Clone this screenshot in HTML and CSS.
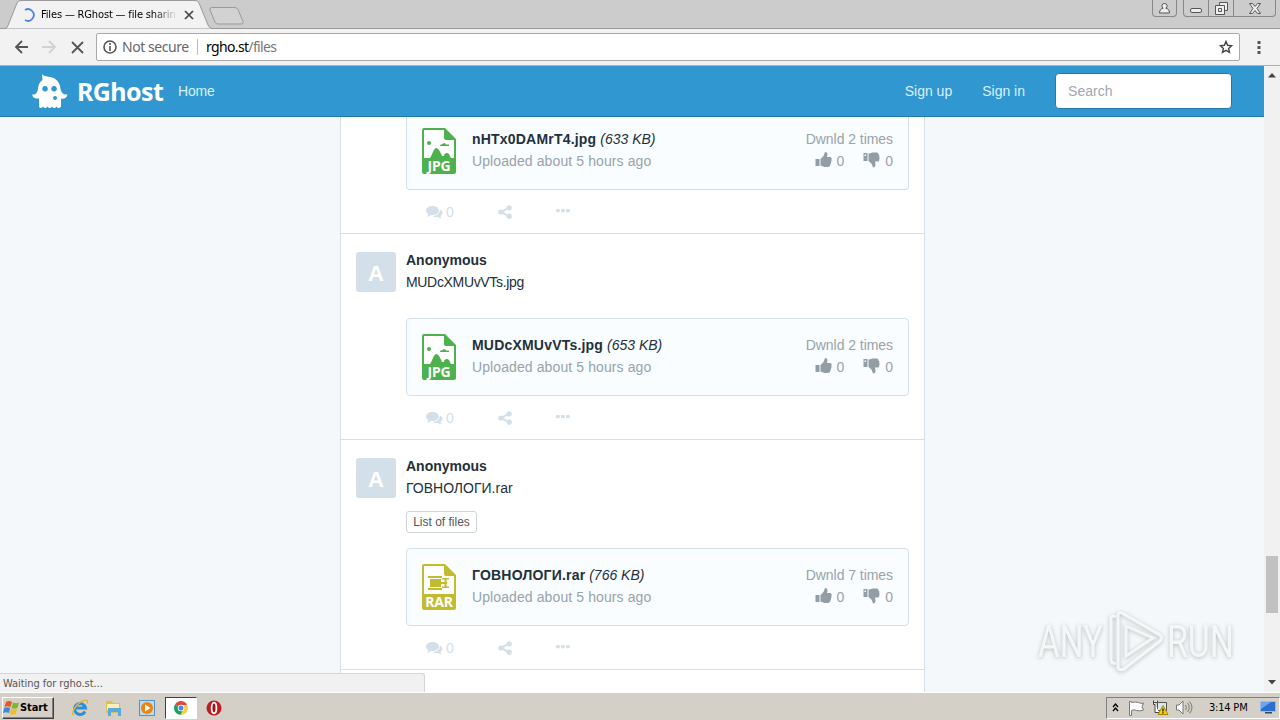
FILE: index.html
```
<!DOCTYPE html>
<html lang="en">

<head>
  <meta charset="UTF-8">
  <title>Files — RGhost — file sharing</title>
  <link rel="stylesheet" href="styles.css">
</head>

<body>
  <svg class="defs" width="0" height="0">
    <symbol id="i-jpg" viewBox="0 0 34 46">
      <path fill="#4db14d" d="M2 0h21l11 11v33a2 2 0 0 1-2 2H2a2 2 0 0 1-2-2V2a2 2 0 0 1 2-2z" />
      <path fill="#fff" d="M2 2h20v8q0 2 2 2h8v18h-3c-1-2-2-5-4-5s-3 1-3 3h-2c-2-5-4-8-6-8s-4 7-6 10H2z" />
      <circle cx="7" cy="15" r="2" fill="#4db14d" />
      <path fill="#4db14d" d="M18 17q3-1 4-2 2 0 2 1.500h3v1.500h-9z" />
    </symbol>
    <symbol id="i-rar" viewBox="0 0 34 46">
      <path fill="#c3bb2f" d="M2 0h21l11 11v33a2 2 0 0 1-2 2H2a2 2 0 0 1-2-2V2a2 2 0 0 1 2-2z" />
      <path fill="#fff" d="M2 2h20v8q0 2 2 2h8v18H2z" />
      <path fill="#c3bb2f" d="M6 12h14v2H6zM8 15h11v8H8zM6 24h14v2H6zM19 18h6v2h-6zM20 14h7v1.500h-2.500v7H27V24h-7v-1.500h2.500v-7H20z" />
    </symbol>
    <symbol id="i-up" viewBox="0 0 16 16">
      <path d="M0 7h4v7H0zM5 7l3-3 1.500-4c2 0 2.500 1 2.500 2.500L11.500 5H15c1.500 1 1.500 2 .8 3 .5 1 .2 2-.4 2.500.2 1-.1 2-.7 2.300 0 1.700-1 2.200-2.700 2.200H9l-4-1.500z" />
    </symbol>
    <symbol id="i-down" viewBox="0 0 16 16">
      <path fill-rule="evenodd" d="M0 1h4v8H0zM1 2.500v1.500h1.500V2.500zM5 1.500h1L9 .5h4c1.500 0 2 .8 2 2 .8.500 1 1.500.7 2.300.5 1 .5 2 0 2.700C16 9 15 9.500 14 9.500h-2.500l.5 3c0 2-.5 3-2.500 3L8 11.500 5 9z" />
    </symbol>
    <symbol id="i-comments" viewBox="0 0 17 14">
      <path d="M6.500 1C10 1 13 3 13 5.500S10 10 6.500 10L5 9.900C4 11 2.500 11.500 1 11.500c1-.8 1.300-1.500 1.400-2.400C1 8.300 0 7 0 5.500 0 3 3 1 6.500 1z" />
      <path d="M14 4.500c1.500.8 2.500 2 2.500 3.300s-.8 2.400-2 3.200c.1.800.5 1.500 1.500 2.300-1.500 0-3-.5-4-1.400-2 .3-4.300 0-5.700-.9 4 0 7.500-2 7.700-6.500z" />
    </symbol>
    <symbol id="i-share" viewBox="0 0 14 14">
      <circle cx="11.200" cy="2.800" r="2.600" />
      <circle cx="2.800" cy="7" r="2.600" />
      <circle cx="11.200" cy="11.200" r="2.600" />
      <path d="M2.500 6l8-4 .8 1.800-6 3.200 6 3.200-.8 1.800-8-4z" />
    </symbol>
    <symbol id="i-dots" viewBox="0 0 14 4">
      <rect width="3.800" height="3.300" rx="1" />
      <rect x="5" width="3.800" height="3.300" rx="1" />
      <rect x="10" width="3.800" height="3.300" rx="1" />
    </symbol>
  </svg>

  <div class="titlebar">
    <div class="tab">
      <svg class="tab-shape" width="216" height="29">
        <path d="M0 28.500h5q2 0 3-3L17 3q1-2.500 4-2.500h174q3 0 4 2.500l9 22q1 3 4 3.500h4" />
      </svg>
      <svg class="spinner" width="14" height="14">
        <path d="M3 2A5.800 5.800 0 1 1 3 12" />
      </svg>
      <span class="tab-title">Files — RGhost — file sharing</span>
      <svg class="tab-close" width="10" height="10">
        <path d="M1 1l8 8M9 1L1 9" />
      </svg>
    </div>
    <svg class="newtab" width="36" height="18">
      <path d="M3 .5h23q2 0 3 2l5 12q.5 2.500-1 2.500H9q-2 0-3-2L1 3Q.5.500 3 .5z" />
    </svg>
    <div class="winbtns">
      <div class="winbtn user">
        <svg width="11" height="11"><path d="M5.500.5a2.500 2.500 0 0 1 1.300 4.700C9 5.800 10.500 7 10.500 10H.5C.5 7 2 5.800 4.200 5.200A2.500 2.500 0 0 1 5.500.5z" /></svg>
      </div>
      <div class="winbtn min">
        <svg width="13" height="5"><rect x=".5" y=".5" width="11" height="4" rx="1.500" /></svg>
      </div>
      <div class="winbtn max">
        <svg width="13" height="13"><path d="M4.500 3.500v-3h8v8h-3M.5 3.500h9v9h-9zM3.500 6.500h3v3h-3z" /></svg>
      </div>
      <div class="winbtn close">
        <svg width="12" height="11"><path d="M.5.500h3L6 3.500 8.500.5h3L8 5.500l3.500 5h-3L6 7.500l-2.500 3h-3L4 5.500z" /></svg>
      </div>
    </div>
  </div>

  <div class="toolbar">
    <svg class="tool back" width="15" height="14"><path d="M14 7H2M8 1L2 7l6 6" /></svg>
    <svg class="tool fwd" width="15" height="14"><path d="M0 7h13M7 1l6 6-6 6" /></svg>
    <svg class="tool stop" width="13" height="13"><path d="M1 1l11 11M12 1L1 12" /></svg>
    <div class="omnibox">
      <svg width="14" height="14" class="info"><circle cx="7" cy="7" r="6" /><path d="M7 6v5M7 3v2" /></svg>
      <span class="notsecure">Not secure</span>
      <span class="url">rgho.st<i>/files</i></span>
      <svg width="14" height="14" class="star"><path d="M7 1.500l1.600 3.800 4 .4-3 2.700.9 4L7 10.300 3.500 12.400l.9-4-3-2.700 4-.4z" /></svg>
    </div>
    <svg class="menu" width="4" height="14"><path d="M.5 1h3v3h-3zM.5 6h3v3h-3zM.5 11h3v3h-3z" /></svg>
  </div>

  <div class="content">
    <div class="page">
      <nav class="navbar">
        <a class="brand">
          <svg width="36" height="35" viewBox="0 0 36 35">
            <path fill="#fff" fill-rule="evenodd" d="M10 0c1 2 4 2 8 3 6 1 10 5 10.500 12 1 4 3 6 7 5.500-1 4-4 5-6.500 4v8c-2 2-3 2-4.500 0-1.500 2-3 2-4.500 0-1.500 2-3 2-4.500 0-1.500 2-3 2-4.500 0-1.500 2-3 2-4 0v-8C4 25 1 24 0 20.500c4 .5 5-1.500 6-5.500.3-4 1.500-7 4.500-9zM13 12a2.800 2.800 0 1 0 .1 0zM22 12a2.800 2.800 0 1 0 .1 0zM23 22a2 2 0 1 0 .1 0z" />
          </svg>
          <span class="brand-name">RGhost</span>
        </a>
        <a class="nav-link home">Home</a>
        <a class="nav-link signup">Sign up</a>
        <a class="nav-link signin">Sign in</a>
        <div class="search">Search</div>
      </nav>

      <div class="feed">
        <div class="post cut">
          <div class="post-body">
            <div class="card">
              <div class="type">
                <svg width="34" height="46"><use href="#i-jpg" /></svg>
                <span>JPG</span>
              </div>
              <div class="file">
                <div><b>nHTx0DAMrT4.jpg</b> <em>(633 KB)</em></div>
                <div class="muted up">Uploaded about 5 hours ago</div>
              </div>
              <div class="stats muted">
                <div>Dwnld 2 times</div>
                <div class="votes">
                  <svg width="17" height="16"><use href="#i-up" /></svg><span>0</span>
                  <svg width="17" height="16"><use href="#i-down" /></svg><span>0</span>
                </div>
              </div>
            </div>
            <div class="actions">
              <svg width="17" height="14"><use href="#i-comments" /></svg><span>0</span>
              <svg class="share" width="14" height="14"><use href="#i-share" /></svg>
              <svg class="dots" width="14" height="4"><use href="#i-dots" /></svg>
            </div>
          </div>
        </div>

        <div class="post">
          <div class="avatar">A</div>
          <div class="post-body">
            <div class="author">Anonymous</div>
            <div class="name n1">MUDcXMUvVTs.jpg</div>
            <div class="card">
              <div class="type">
                <svg width="34" height="46"><use href="#i-jpg" /></svg>
                <span>JPG</span>
              </div>
              <div class="file">
                <div><b>MUDcXMUvVTs.jpg</b> <em>(653 KB)</em></div>
                <div class="muted up">Uploaded about 5 hours ago</div>
              </div>
              <div class="stats muted">
                <div>Dwnld 2 times</div>
                <div class="votes">
                  <svg width="17" height="16"><use href="#i-up" /></svg><span>0</span>
                  <svg width="17" height="16"><use href="#i-down" /></svg><span>0</span>
                </div>
              </div>
            </div>
            <div class="actions">
              <svg width="17" height="14"><use href="#i-comments" /></svg><span>0</span>
              <svg class="share" width="14" height="14"><use href="#i-share" /></svg>
              <svg class="dots" width="14" height="4"><use href="#i-dots" /></svg>
            </div>
          </div>
        </div>

        <div class="post">
          <div class="avatar">A</div>
          <div class="post-body">
            <div class="author">Anonymous</div>
            <div class="name">ГОВНОЛОГИ.rar</div>
            <div class="list-btn">List of files</div>
            <div class="card">
              <div class="type">
                <svg width="34" height="46"><use href="#i-rar" /></svg>
                <span>RAR</span>
              </div>
              <div class="file">
                <div><b>ГОВНОЛОГИ.rar</b> <em>(766 KB)</em></div>
                <div class="muted up">Uploaded about 5 hours ago</div>
              </div>
              <div class="stats muted">
                <div>Dwnld 7 times</div>
                <div class="votes">
                  <svg width="17" height="16"><use href="#i-up" /></svg><span>0</span>
                  <svg width="17" height="16"><use href="#i-down" /></svg><span>0</span>
                </div>
              </div>
            </div>
            <div class="actions">
              <svg width="17" height="14"><use href="#i-comments" /></svg><span>0</span>
              <svg class="share" width="14" height="14"><use href="#i-share" /></svg>
              <svg class="dots" width="14" height="4"><use href="#i-dots" /></svg>
            </div>
          </div>
        </div>
      </div>
    </div>

    <div class="scrollbar">
      <svg width="8" height="5"><path d="M4 0l4 4.500H0z" /></svg>
      <div class="thumb"></div>
      <svg width="8" height="5"><path d="M0 0h8L4 4.500z" /></svg>
    </div>

    <div class="status">Waiting for rgho.st...</div>

    <svg class="watermark" width="220" height="76" viewBox="0 0 220 76">
      <g class="wm-text">
        <text x="4" y="50" textLength="65" lengthAdjust="spacingAndGlyphs">ANY</text>
        <text x="133" y="50" textLength="67" lengthAdjust="spacingAndGlyphs">RUN</text>
      </g>
      <g class="wm-mark">
        <path d="M82 10q-5-3-5 2v40q0 5 5 4" />
        <path d="M84 9q0-5 4-3l38 22q3 3 0 6L90 62q-4 2-6-1z" />
        <path d="M92 19l27 12-27 18z" />
      </g>
    </svg>
  </div>

  <div class="taskbar">
    <div class="start">
      <svg width="17" height="16" viewBox="0 0 17 16">
        <path fill="#e8562a" d="M3 2q3-2 6 0L7.500 7q-3-1.500-6 0z" />
        <path fill="#7cb82f" d="M10 2.500q3 1.500 6 0L14.500 8q-3 1.500-6 0z" />
        <path fill="#3b8bd8" d="M1.200 8q3-1.500 6 0L6 13q-3-1.500-6 0z" />
        <path fill="#f5bc27" d="M8 8.800q3 1.500 6 0L12.800 14q-3 1.500-6 0z" />
      </svg>
      <span>Start</span>
    </div>
    <div class="launch">
      <svg width="18" height="18" viewBox="0 0 18 18">
        <path fill="none" stroke="#2b8fdc" stroke-width="3" d="M14 12.500A5.500 5.500 0 1 1 14.500 9H5" />
        <path fill="none" stroke="#e9b52b" stroke-width="1.500" d="M3 16C-1 15 5 4 13 1.500c4-1 4 1 3 3" />
      </svg>
    </div>
    <div class="launch">
      <svg width="18" height="18" viewBox="0 0 18 18">
        <path fill="#e3bd50" d="M1 2h6l1 2h7v10H1z" />
        <path fill="#fbefb4" d="M2 5h12v6H2z" />
        <path fill="#58a9df" d="M3 9h13v8h-3v-4H6v4H3z" />
      </svg>
    </div>
    <div class="launch">
      <svg width="18" height="18" viewBox="0 0 18 18">
        <rect x="1.500" y="1.500" width="15" height="15" fill="#b9dcf5" stroke="#4f93c9" />
        <circle cx="9" cy="9" r="6" fill="#ee8410" />
        <path fill="#fff" d="M7 5.500l5.500 3.500L7 12.500z" />
      </svg>
    </div>
    <div class="launch active">
      <svg width="14" height="14" viewBox="0 0 14 14">
        <path fill="#dd4b3e" d="M7 7L1 3.500a7 7 0 0 1 12 0z" />
        <path fill="#1aa15f" d="M7 7L1 3.500A7 7 0 0 0 6.500 14l3-5z" />
        <path fill="#fdce42" d="M7 4h6.300A7 7 0 0 1 6.500 14L10 8z" />
        <circle cx="7" cy="7" r="3.300" fill="#fff" />
        <circle cx="7" cy="7" r="2.500" fill="#4a88ee" />
      </svg>
    </div>
    <div class="launch">
      <svg width="16" height="16" viewBox="0 0 16 16">
        <circle cx="8" cy="8" r="7.500" fill="#c01c1f" />
        <ellipse cx="8" cy="8" rx="2.400" ry="5.300" fill="#9c1214" stroke="#fff" stroke-width="1.800" />
      </svg>
    </div>
    <div class="tray">
      <svg class="chev" width="7" height="9"><path d="M1 4l2.500-3L6 4M1 8l2.500-3L6 8" /></svg>
      <svg class="flag" width="17" height="16"><path d="M1.500 1.500v14h2v-5q3-1.500 5 0 3 1 7-.5l-1.500-3 1.500-4q-3 1-5-.5-3-1-7 0v-1z" /></svg>
      <svg class="net" width="17" height="17" viewBox="0 0 17 17">
        <path fill="#dde6ea" stroke="#555" d="M5.500 3.500h9v8h-9z" />
        <path fill="#fff" stroke="#444" d="M1.500 1.500v4h1.500v8h4M1.500 3.500h4v-2" />
        <path fill="#f6cf1c" stroke="#a78a00" d="M11 6.500l5 9H6z" />
        <path stroke="#222" stroke-width="1.400" d="M11 9.500v3M11 13.300v1.200" />
      </svg>
      <svg class="vol" width="17" height="15"><path fill="#fff" d="M.5 5v5H3l4 4V1L3 5z" /><path fill="none" d="M9.500 5q2 2.500 0 5M11.500 3q3.500 4.500 0 9M13.500 1.500q5 6 0 12" /></svg>
      <span class="clock">3:14 PM</span>
      <svg class="desk" width="16" height="13"><rect x=".5" y=".5" width="15" height="10" fill="#2a6fcf" stroke="#9dbdde" /><path fill="#6aa6ec" d="M1 1h10L1 8z" /><path fill="#2d4a73" d="M5 11h7v1.500H5z" /></svg>
    </div>
  </div>
</body>

</html>
```
FILE: styles.css
```
* {
  box-sizing: border-box;
}

body {
  margin: 0;
  width: 1280px;
  height: 720px;
  display: flex;
  flex-direction: column;
  overflow: hidden;
  font-family: "Liberation Sans", Arial, sans-serif;
  font-size: 14px;
  line-height: 22px;
  color: #22303a;
}

svg {
  display: block;
  flex: none;
}

.defs {
  position: absolute;
}

/* browser window */
.titlebar {
  height: 29px;
  flex: none;
  display: flex;
  background: #ccc;
  border-bottom: 1px solid #999;
}

.tab {
  position: relative;
  width: 216px;
  height: 29px;
  padding-left: 22px;
  display: flex;
  align-items: center;
  font: 11px/28px "DejaVu Sans Condensed", sans-serif;
  color: #000;
}

.tab-shape {
  position: absolute;
  left: 0;
  top: 0;
  fill: #f2f2f2;
  stroke: #999;
}

.spinner,
.tab-title,
.tab-close {
  position: relative;
}

.spinner {
  fill: none;
  stroke: #4d80e8;
  stroke-width: 1.8;
}

.tab-title {
  width: 135px;
  margin-left: 5px;
  overflow: hidden;
  white-space: nowrap;
  letter-spacing: -.15px;
  -webkit-mask-image: linear-gradient(90deg, #000 112px, transparent 137px);
}

.tab-close {
  margin-left: 8px;
  stroke: #444;
  stroke-width: 1.7;
}

.newtab {
  margin: 7px 0 0 -7px;
  fill: #d2d2d2;
  stroke: #999;
}

.winbtns {
  margin-left: auto;
  margin-right: 4px;
  display: flex;
}

.winbtn {
  height: 17px;
  border: 1px solid #888;
  border-top: 0;
  border-left-width: 0;
  display: flex;
  justify-content: center;
  align-items: center;
}

.winbtn svg {
  fill: #eee;
  stroke: #555;
}

.user {
  width: 25px;
  margin-right: 6px;
  border-left-width: 1px;
  border-radius: 0 0 4px 4px;
}

.min {
  width: 26px;
  border-left-width: 1px;
  border-radius: 0 0 0 4px;
}

.min svg {
  margin-top: 5px;
}

.max {
  width: 25px;
}

.close {
  width: 42px;
  border-radius: 0 0 4px 0;
}

.toolbar {
  height: 37px;
  flex: none;
  display: flex;
  align-items: center;
  padding-left: 14px;
  background: #f2f2f2;
  border-bottom: 1px solid #b0b0b0;
}

.tool {
  fill: none;
  stroke: #555;
  stroke-width: 1.8;
  margin-right: 13px;
}

.fwd {
  stroke: #d2d2d2;
}

.stop {
  margin-left: 1px;
  margin-right: 12px;
}

.omnibox {
  width: 1144px;
  height: 28px;
  display: flex;
  align-items: center;
  padding: 0 6px;
  background: #fff;
  border: 1px solid #a9a9a9;
  border-radius: 2px;
  font: 14px/26px "Noto Sans", sans-serif;
}

.info {
  fill: none;
  stroke: #555;
  stroke-width: 1.6;
}

.notsecure {
  width: 75px;
  margin-left: 5px;
  color: #666;
  white-space: nowrap;
  letter-spacing: -.45px;
}

.url {
  padding-left: 8px;
  line-height: 16px;
  border-left: 1px solid #bbb;
  color: #000;
  letter-spacing: -.65px;
}

.url i {
  font-style: normal;
  color: #777;
}

.star {
  margin-left: auto;
  fill: none;
  stroke: #444;
  stroke-width: 1.4;
}

.menu {
  margin-left: 17px;
  fill: #555;
}

/* site */
.content {
  position: relative;
  height: 626px;
  flex: none;
  display: flex;
  overflow: hidden;
}

.page {
  width: 1264px;
  background: #f5f8fa;
}

.navbar {
  height: 51px;
  display: flex;
  align-items: center;
  padding: 0 32px;
  background: #3097d1;
  border-bottom: 1px solid #2579a9;
  color: #d9f1ff;
}

.brand {
  width: 146px;
  display: flex;
  align-items: center;
}

.brand-name {
  margin-left: 9px;
  font: bold 25px/30px "Noto Sans", sans-serif;
  letter-spacing: -.6px;
  color: #fff;
}

.home {
  letter-spacing: -.2px;
}

.signup {
  margin-left: auto;
}

.signin {
  margin: 0 30px;
}

.search {
  width: 177px;
  height: 36px;
  padding: 0 12px;
  border: 1px solid #2579a9;
  border-radius: 4px;
  background: #fff;
  color: #a0a8ad;
  line-height: 35px;
  letter-spacing: .05px;
}

.feed {
  width: 585px;
  height: 575px;
  margin-left: 340px;
  background: #fff;
  border: solid #d3e0e9;
  border-width: 0 1px;
}

.post {
  display: flex;
  padding: 15px 15px 0;
  border-bottom: 1px solid #d3e0e9;
}

.avatar {
  width: 40px;
  height: 40px;
  margin: 3px 10px 0 0;
  border-radius: 3px;
  background: #d3e0e9;
  color: #fff;
  font-size: 22px;
  font-weight: bold;
  line-height: 43px;
  text-align: center;
}

.post-body {
  width: 503px;
}

.author {
  font-weight: bold;
}

.n1 {
  letter-spacing: -.33px;
}

.card {
  height: 78px;
  margin-top: 25px;
  padding: 15px;
  display: flex;
  background: #fafdff;
  border: 1px solid #d3e0e9;
  border-radius: 4px;
}

.list-btn + .card {
  margin-top: 15px;
}

.cut {
  padding: 0 15px 0 65px;
}

.cut .card {
  height: 73px;
  margin-top: 0;
  padding-top: 11px;
  border-top: 0;
  border-radius: 0 0 4px 4px;
}

.type {
  position: relative;
  width: 34px;
}

.type span {
  position: absolute;
  left: 0;
  bottom: 1px;
  width: 34px;
  font: bold 14px/14px "Noto Sans", sans-serif;
  letter-spacing: -.2px;
  text-align: center;
  color: #fff;
}

.cut .type,
.card .type {
  height: 46px;
}

.file {
  margin-left: 16px;
}

.file b {
  letter-spacing: .2px;
}

.muted {
  color: #98a3aa;
}

.up {
  letter-spacing: .1px;
}

.stats {
  margin-left: auto;
  text-align: right;
  letter-spacing: -.05px;
}

.votes {
  display: flex;
  align-items: center;
  justify-content: flex-end;
}

.votes svg {
  margin: -2px 5px 0 19px;
  fill: #929ea5;
}

.list-btn {
  width: 71px;
  height: 22px;
  margin-top: 12px;
  border: 1px solid #ccd4d9;
  border-radius: 3px;
  font-size: 12px;
  line-height: 20px;
  text-align: center;
  color: #555;
  white-space: nowrap;
}

.actions {
  height: 43px;
  padding-left: 20px;
  display: flex;
  align-items: center;
  color: #d3e0e9;
  fill: #d3e0e9;
}

.actions span {
  margin-left: 3px;
}

.share {
  margin-left: 44px;
}

.dots {
  margin-left: 44px;
  margin-top: -2px;
}

.scrollbar {
  width: 16px;
  padding: 7px 0;
  display: flex;
  flex-direction: column;
  align-items: center;
  background: #f1f1f1;
  fill: #444;
}

.thumb {
  width: 12px;
  height: 57px;
  margin-top: auto;
  margin-bottom: 67px;
  background: #c1c1c1;
}

.status {
  position: absolute;
  left: 0;
  bottom: 0;
  width: 425px;
  height: 19px;
  padding-left: 3px;
  background: #f1f1f1;
  border: 1px solid #d5d5d5;
  border-left: 0;
  border-bottom: 0;
  border-radius: 0 3px 0 0;
  font: 11px/19px "DejaVu Sans Condensed", sans-serif;
  color: #555;
  letter-spacing: -.05px;
}

.watermark {
  position: absolute;
  left: 1034px;
  top: 541px;
  filter: drop-shadow(0 1px 2px rgba(0, 0, 0, .25));
}

.wm-text {
  font: 44px Roboto, sans-serif;
  fill: #f4f7f8;
}

.wm-mark {
  fill: none;
  stroke: #f4f7f8;
  stroke-width: 3;
}

/* taskbar */
.taskbar {
  height: 28px;
  flex: none;
  display: flex;
  align-items: center;
  padding-top: 2px;
  background: #d4d0c8;
  border-top: 1px solid #fff;
}

.start {
  width: 52px;
  height: 22px;
  margin: 0 10px 0 2px;
  display: flex;
  align-items: center;
  border: 1px solid;
  border-color: #fff #404040 #404040 #fff;
  box-shadow: inset -1px -1px 0 #808080;
  font: bold 11px/20px "DejaVu Sans Condensed", sans-serif;
  color: #000;
  letter-spacing: -.1px;
}

.launch {
  width: 32px;
  height: 22px;
  margin-right: 1.5px;
  display: flex;
  align-items: center;
  justify-content: center;
}

.active {
  background: #fff;
  border: 1px solid;
  border-color: #404040 #fff #fff #404040;
}

.tray {
  width: 174px;
  height: 22px;
  margin-left: auto;
  padding-left: 5px;
  display: flex;
  align-items: center;
  border: 1px solid;
  border-color: #808080 #fff #fff #808080;
}

.chev {
  fill: none;
  stroke: #000;
  stroke-width: 1.3;
}

.flag {
  margin-left: 9px;
  fill: #fff;
  stroke: #777;
}

.net {
  margin-left: 7px;
}

.vol {
  margin-left: 7px;
  stroke: #777;
}

.clock {
  width: 40px;
  margin-left: 16px;
  font: 11px "DejaVu Sans Condensed", sans-serif;
  color: #000;
  white-space: nowrap;
  letter-spacing: -.2px;
}

.desk {
  margin-left: 11px;
}
```
